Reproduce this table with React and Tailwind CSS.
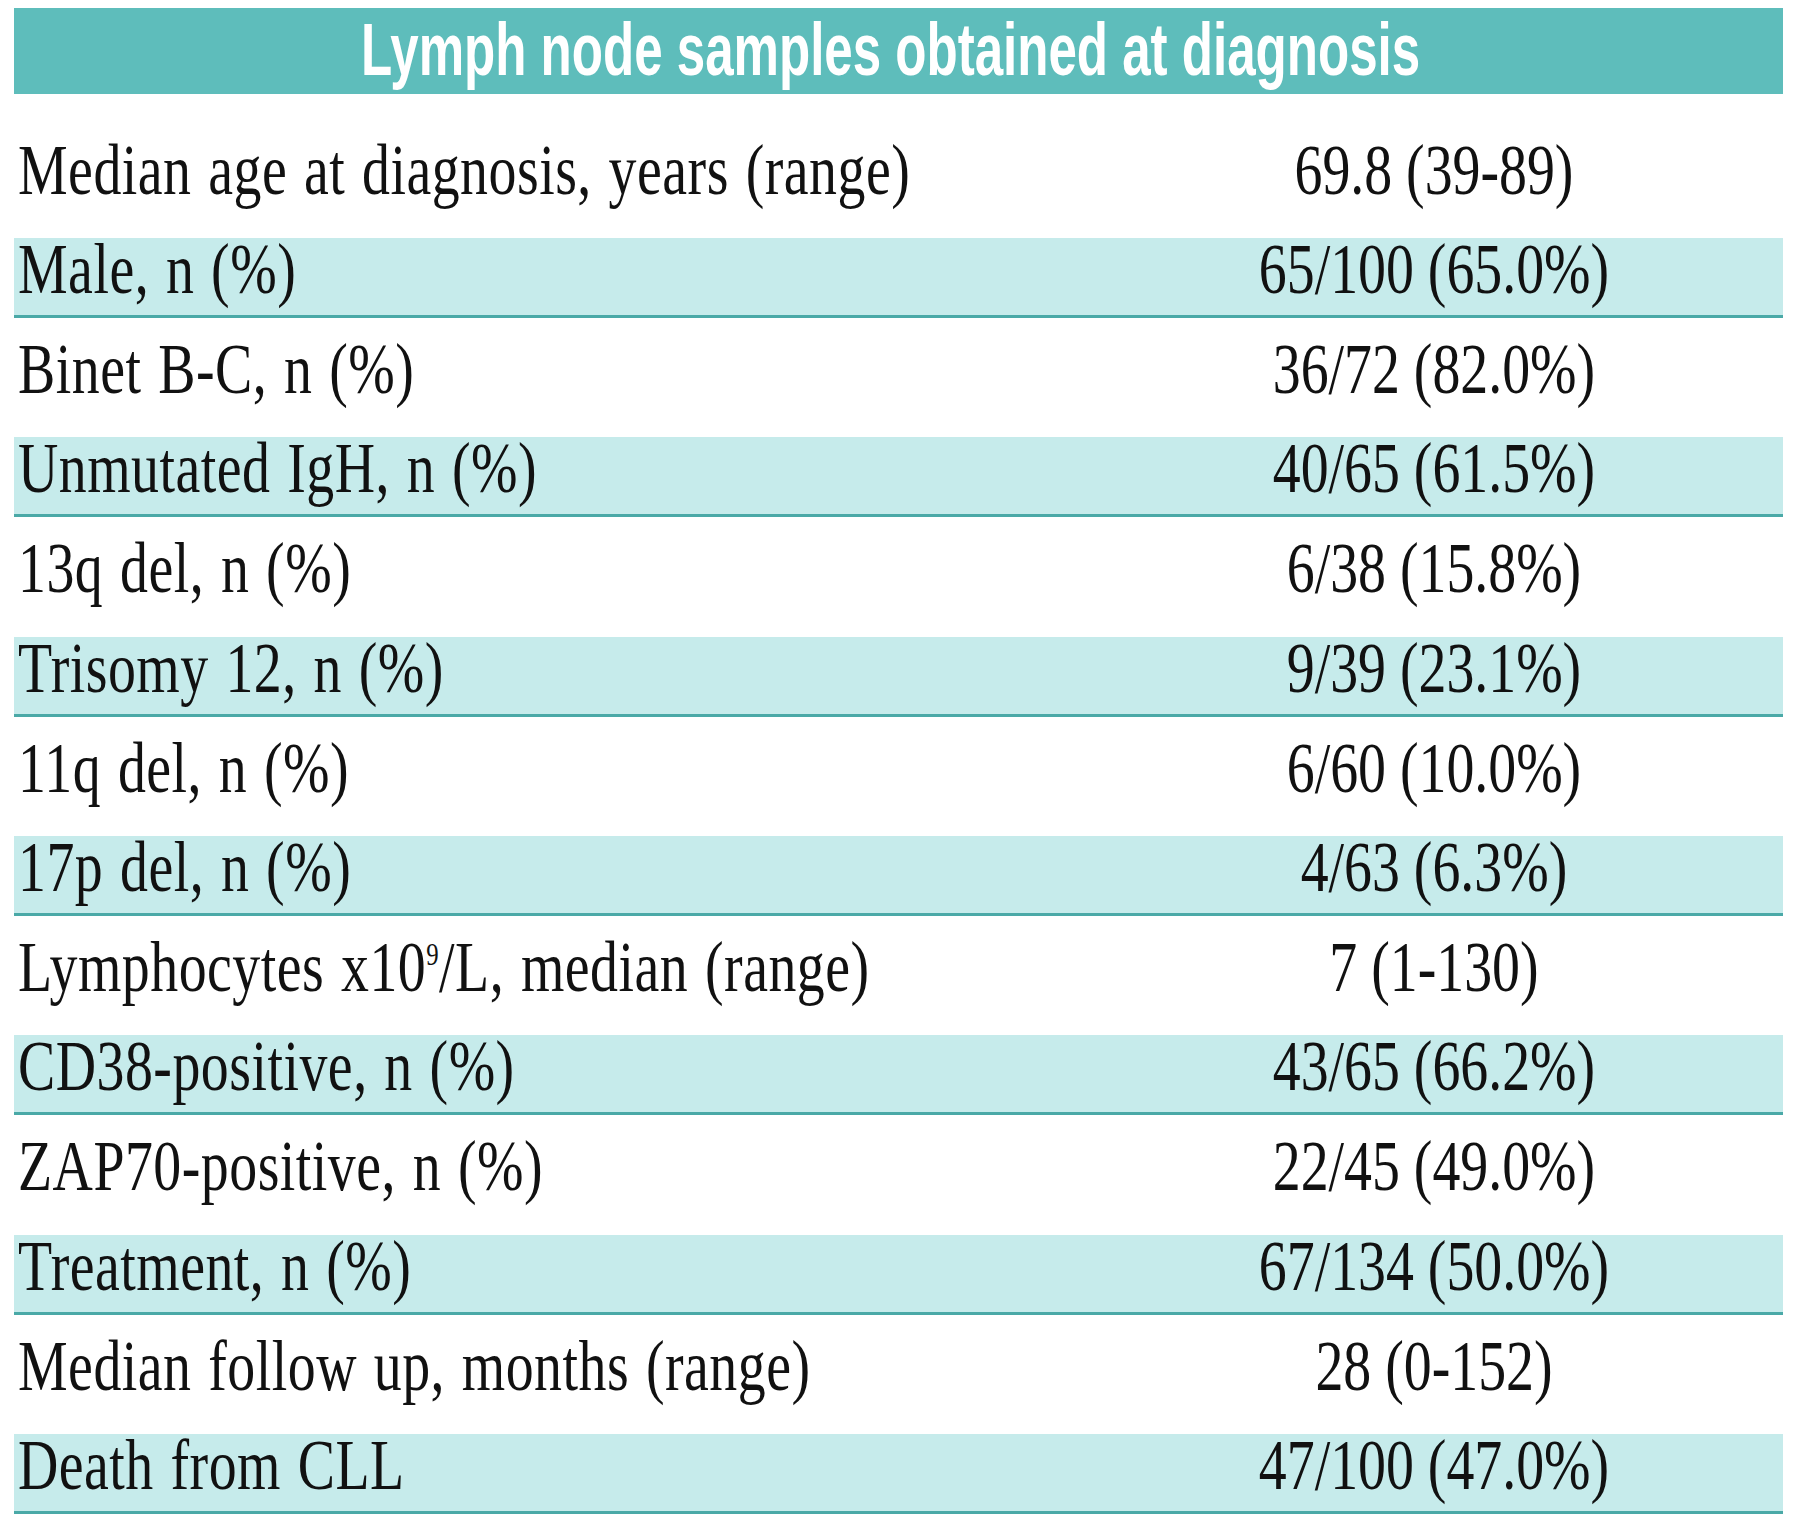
import React from "react";

const rows = [
  ["Median age at diagnosis, years (range)", "69.8 (39-89)"],
  ["Male, n (%)", "65/100 (65.0%)"],
  ["Binet B-C, n (%)", "36/72 (82.0%)"],
  ["Unmutated IgH, n (%)", "40/65 (61.5%)"],
  ["13q del, n (%)", "6/38 (15.8%)"],
  ["Trisomy 12, n (%)", "9/39 (23.1%)"],
  ["11q del, n (%)", "6/60 (10.0%)"],
  ["17p del, n (%)", "4/63 (6.3%)"],
  ["LYMPH", "7 (1-130)"],
  ["CD38-positive, n (%)", "43/65 (66.2%)"],
  ["ZAP70-positive, n (%)", "22/45 (49.0%)"],
  ["Treatment, n (%)", "67/134 (50.0%)"],
  ["Median follow up, months (range)", "28 (0-152)"],
  ["Death from CLL", "47/100 (47.0%)"],
];

const serif = { fontFamily: '"Liberation Serif", "Times New Roman", serif' };

function Label({ text }) {
  if (text === "LYMPH") {
    return (
      <>
        Lymphocytes x10
        <sup className="text-[32px] -top-[26px]">9</sup>/L, median (range)
      </>
    );
  }
  return text;
}

export default function App() {
  return (
    <div className="w-[1800px] h-[1540px] bg-white pt-[8px] pl-[14px]">
      <div className="w-[1769px]">
        <div className="h-[86px] bg-[#5ebdbb] flex justify-center overflow-hidden">
          <span
            className="inline-block whitespace-nowrap text-white font-bold text-[74px] leading-[83px] scale-x-[0.69] origin-center mr-[16px]"
            style={{ fontFamily: '"Liberation Sans", Arial, sans-serif' }}
          >
            Lymph node samples obtained at diagnosis
          </span>
        </div>
        {rows.map(([label, value], i) => {
          const band = i % 2 === 1;
          const first = i === 0;
          const rowCls = first
            ? "h-[144px] pt-[45px] bg-white"
            : band
            ? "h-[80px] bg-[#c6ebeb] border-b-[3px] border-[#4aa9a7]"
            : "h-[119.33px] pt-[20px] bg-white";
          return (
            <div key={i} className={`flex items-start text-[#111] ${rowCls}`} style={serif}>
              <div className="w-[1071px] pl-[4px] whitespace-nowrap">
                <span className="inline-block text-[72px] leading-[62px] scale-x-[0.775] origin-left tracking-[0.65px] [word-spacing:3px]">
                  <Label text={label} />
                </span>
              </div>
              <div className="w-[698px] flex justify-center whitespace-nowrap">
                <span className="inline-block text-[72px] leading-[62px] scale-x-[0.775] origin-center">
                  {value}
                </span>
              </div>
            </div>
          );
        })}
      </div>
    </div>
  );
}
